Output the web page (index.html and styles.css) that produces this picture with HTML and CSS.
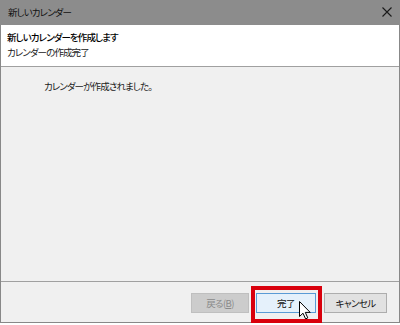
FILE: index.html
```html
<!DOCTYPE html>
<html lang="ja">
<head>
    <meta charset="UTF-8">
    <title>新しいカレンダー</title>
    <link rel="stylesheet" href="styles.css">
</head>
<body>

<div class="window">
    <div class="titlebar">
        <span class="title">新しいカレンダー</span>
        <svg class="close" width="10" height="10" viewBox="0 0 10 10">
            <path d="M0.5 0.5 L9.5 9.5 M9.5 0.5 L0.5 9.5" stroke="#1a1a1a" stroke-width="1.1" fill="none"/>
        </svg>
    </div>

    <div class="header">
        <div class="header-title">新しいカレンダーを作成します</div>
        <div class="header-sub">カレンダーの作成完了</div>
    </div>

    <div class="content">
        <p class="message">カレンダーが作成されました。</p>
    </div>

    <div class="footer">
        <button class="btn btn-disabled" disabled>戻る(<u>B</u>)</button>
        <span class="highlight">
            <button class="btn btn-default">完了</button>
            <svg class="cursor" width="13" height="19" viewBox="0 0 13 19">
                <path d="M0.5 0.5 L0.5 15.5 L4 12.2 L6.6 17.9 L8.8 16.9 L6.3 11.4 L11.2 11.4 Z" fill="#fff" stroke="#000" stroke-width="1" stroke-linejoin="round"/>
            </svg>
        </span>
        <button class="btn btn-cancel">キャンセル</button>
    </div>
</div>

</body>
</html>
```

FILE: styles.css
```css
body {
    margin: 0;
    padding: 0;
    background: #ffffff;
    font-family: "Noto Sans CJK JP", "Noto Sans", sans-serif;
    font-feature-settings: "palt";
    font-size: 9.5px;
    letter-spacing: -0.9px;
    color: #1a1a1a;
}
.window {
    width: 398px;
    height: 322px;
    border: 1px solid #888888;
    border-top: none;
    display: flex;
    flex-direction: column;
    background: #f0f0f0;
}
.titlebar {
    height: 25px;
    background: #8c8c8c;
    display: flex;
    align-items: center;
    justify-content: space-between;
    padding: 0 7px 0 8px;
    margin: 0 -1px;
}
.title {
    color: #111;
    margin-top: -1px;
}
.close {
    margin-right: 1px;
    margin-top: -1px;
}
.header {
    height: 42px;
    background: #ffffff;
    border-bottom: 1px solid #a0a0a0;
    padding: 5px 0 0 6px;
    box-sizing: border-box;
    line-height: 15px;
}
.header-title {
    font-weight: 500;
    color: #000;
}
.header-sub {
    color: #222;
}
.content {
    flex: 1;
    padding: 12px 0 0 43px;
}
.message {
    margin: 0;
    line-height: 15px;
}
.footer {
    height: 41px;
    border-top: 1px solid #a0a0a0;
    box-sizing: border-box;
    display: flex;
    justify-content: flex-end;
    align-items: flex-start;
    gap: 7px;
    padding: 11px 12px 0 0;
}
.btn {
    width: 60px;
    height: 20px;
    padding: 0;
    font-family: inherit;
    font-feature-settings: "palt";
    font-size: 9.5px;
    letter-spacing: -0.6px;
    color: #111;
    background: #e1e1e1;
    border: 1px solid #adadad;
}
.btn-disabled {
    width: 58px;
    background: #cccccc;
    border-color: #bfbfbf;
    color: #8a8a8a;
}
.btn-default {
    background: #e5f1fb;
    border-color: #5a9bd5;
}
.btn-cancel {
    width: 63px;
}
.highlight {
    position: relative;
    display: inline-block;
    height: 20px;
    margin-right: 1px;
}
.highlight::after {
    content: "";
    position: absolute;
    top: -7px;
    left: -5px;
    right: -6px;
    bottom: -10px;
    border: 4px solid #d9000c;
}
.cursor {
    position: absolute;
    left: 43px;
    top: 8px;
}
```
